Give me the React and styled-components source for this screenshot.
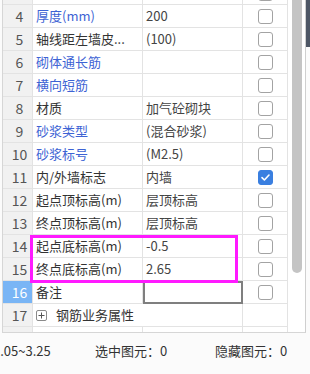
import React from "react";
import styled, { createGlobalStyle } from "styled-components";

const Global = createGlobalStyle`
  html, body { margin: 0; padding: 0; background: #fbfbfb; overflow: hidden; }
  body { font-family: "Noto Sans CJK SC", "Noto Sans", sans-serif; font-size: 13px; color: #333; }
`;

const Page = styled.div`
  width: 310px;
  height: 374px;
  display: flex;
  flex-direction: column;
`;

const TopArea = styled.div`
  height: 333px;
  display: flex;
`;

const Panel = styled.div`
  margin-left: 2px;
  width: 304px;
  height: 333px;
  box-sizing: border-box;
  border-left: 1px solid #d6d6d6;
  border-right: 1px solid #cfcfcf;
  border-bottom: 1px solid #d6d6d6;
  background: #fff;
  display: flex;
`;

const RightStrip = styled.div`
  width: 4px;
  display: flex;
  flex-direction: column;
`;

const DarkTop = styled.div`
  height: 47px;
  background: #4d5665;
`;

const Table = styled.div`
  position: relative;
  width: 285px;
  height: 332px;
  overflow: hidden;
`;

const Grid = styled.div`
  margin-top: -18px;
  display: grid;
  grid-template-columns: 30px 110px 100px 45px;
  grid-auto-rows: 23px;
`;

const Cell = styled.div`
  box-sizing: border-box;
  border-right: 1px solid #e3e3e3;
  border-bottom: 1px solid #e3e3e3;
  display: flex;
  align-items: center;
  white-space: nowrap;
  overflow: hidden;
  line-height: 22px;
`;

const NumCell = styled(Cell)`
  justify-content: center;
  padding-left: 4px;
  background: ${(p) => (p.$active ? "#79b5f5" : "#f1f1f1")};
  color: ${(p) => (p.$active ? "#fff" : "#555")};
  font-size: 14px;
`;

const NameCell = styled(Cell)`
  padding-left: 3px;
  color: ${(p) => (p.$link ? "#3d63d4" : "#333")};
`;

const ValueCell = styled(Cell)`
  padding-left: 3px;
  color: #444;
  ${(p) => (p.$editing ? "outline: 2px solid #7f7f7f; outline-offset: -2px;" : "")}
`;

const GroupCell = styled(Cell)`
  grid-column: span 2;
  padding-left: 3px;
  gap: 9px;
  color: #333;
`;

const CheckCell = styled(Cell)`
  justify-content: center;
`;

const Box = styled.span`
  width: 15px;
  height: 15px;
  box-sizing: border-box;
  border: 1px solid ${(p) => (p.$checked ? "#3a7fe0" : "#a3a3a3")};
  border-radius: 3px;
  background: ${(p) => (p.$checked ? "#3a7fe0" : "#fff")};
  display: flex;
  align-items: center;
  justify-content: center;
`;

const Expander = styled.span`
  width: 11px;
  height: 11px;
  box-sizing: border-box;
  border: 1px solid #8a8a8a;
  border-radius: 2px;
  display: flex;
  align-items: center;
  justify-content: center;
`;

const Highlight = styled.div`
  position: absolute;
  left: 27px;
  top: 235px;
  width: 208px;
  height: 48px;
  box-sizing: border-box;
  border: 3px solid #ff1aff;
  pointer-events: none;
`;

const Scrollbar = styled.div`
  width: 17px;
  height: 332px;
  position: relative;
  background: #fff;
`;

const Thumb = styled.div`
  position: absolute;
  left: 4px;
  top: 0;
  width: 10px;
  height: 273px;
  background: #c4c4c4;
  border-radius: 0 0 5px 5px;
`;

const StatusBar = styled.div`
  flex: 1;
  display: grid;
  grid-template-columns: 95px 120px auto;
  align-items: center;
  padding-bottom: 6px;
  color: #333;
  font-size: 13px;
  white-space: nowrap;
  overflow: hidden;
`;

const Range = styled.span`
  margin-left: -7px;
`;

const rows = [
  { n: 3, name: "结构类别", link: true, value: "砌体墙" },
  { n: 4, name: "厚度(mm)", link: true, value: "200" },
  { n: 5, name: "轴线距左墙皮...", value: "(100)" },
  { n: 6, name: "砌体通长筋", link: true, value: "" },
  { n: 7, name: "横向短筋", link: true, value: "" },
  { n: 8, name: "材质", value: "加气砼砌块" },
  { n: 9, name: "砂浆类型", link: true, value: "(混合砂浆)" },
  { n: 10, name: "砂浆标号", link: true, value: "(M2.5)" },
  { n: 11, name: "内/外墙标志", value: "内墙", checked: true },
  { n: 12, name: "起点顶标高(m)", value: "层顶标高" },
  { n: 13, name: "终点顶标高(m)", value: "层顶标高" },
  { n: 14, name: "起点底标高(m)", value: "-0.5" },
  { n: 15, name: "终点底标高(m)", value: "2.65" },
  { n: 16, name: "备注", value: "", editing: true },
];

const Check = ({ checked }) => (
  <Box $checked={checked}>
    {checked && (
      <svg width="11" height="11" viewBox="0 0 11 11">
        <path d="M2 5.6 L4.4 8 L9 3" fill="none" stroke="#fff" strokeWidth="1.6" strokeLinecap="round" strokeLinejoin="round" />
      </svg>
    )}
  </Box>
);

export default function App() {
  return (
    <Page>
      <Global />
      <TopArea>
        <Panel>
          <Table>
            <Grid>
              {rows.map((r) => (
                <React.Fragment key={r.n}>
                  <NumCell $active={r.editing}>{r.n}</NumCell>
                  <NameCell $link={r.link}>{r.name}</NameCell>
                  <ValueCell $editing={r.editing}>{r.value}</ValueCell>
                  <CheckCell>
                    <Check checked={r.checked} />
                  </CheckCell>
                </React.Fragment>
              ))}
              <NumCell>17</NumCell>
              <GroupCell>
                <Expander>
                  <svg width="7" height="7" viewBox="0 0 7 7">
                    <path d="M3.5 0.5 V6.5 M0.5 3.5 H6.5" stroke="#555" strokeWidth="1" />
                  </svg>
                </Expander>
                钢筋业务属性
              </GroupCell>
              <CheckCell />
              <NumCell />
              <NameCell />
              <ValueCell />
              <CheckCell />
            </Grid>
            <Highlight />
          </Table>
          <Scrollbar>
            <Thumb />
          </Scrollbar>
        </Panel>
        <RightStrip>
          <DarkTop />
        </RightStrip>
      </TopArea>
      <StatusBar>
        <Range>2.05~3.25</Range>
        <span>选中图元：0</span>
        <span>隐藏图元：0</span>
      </StatusBar>
    </Page>
  );
}
